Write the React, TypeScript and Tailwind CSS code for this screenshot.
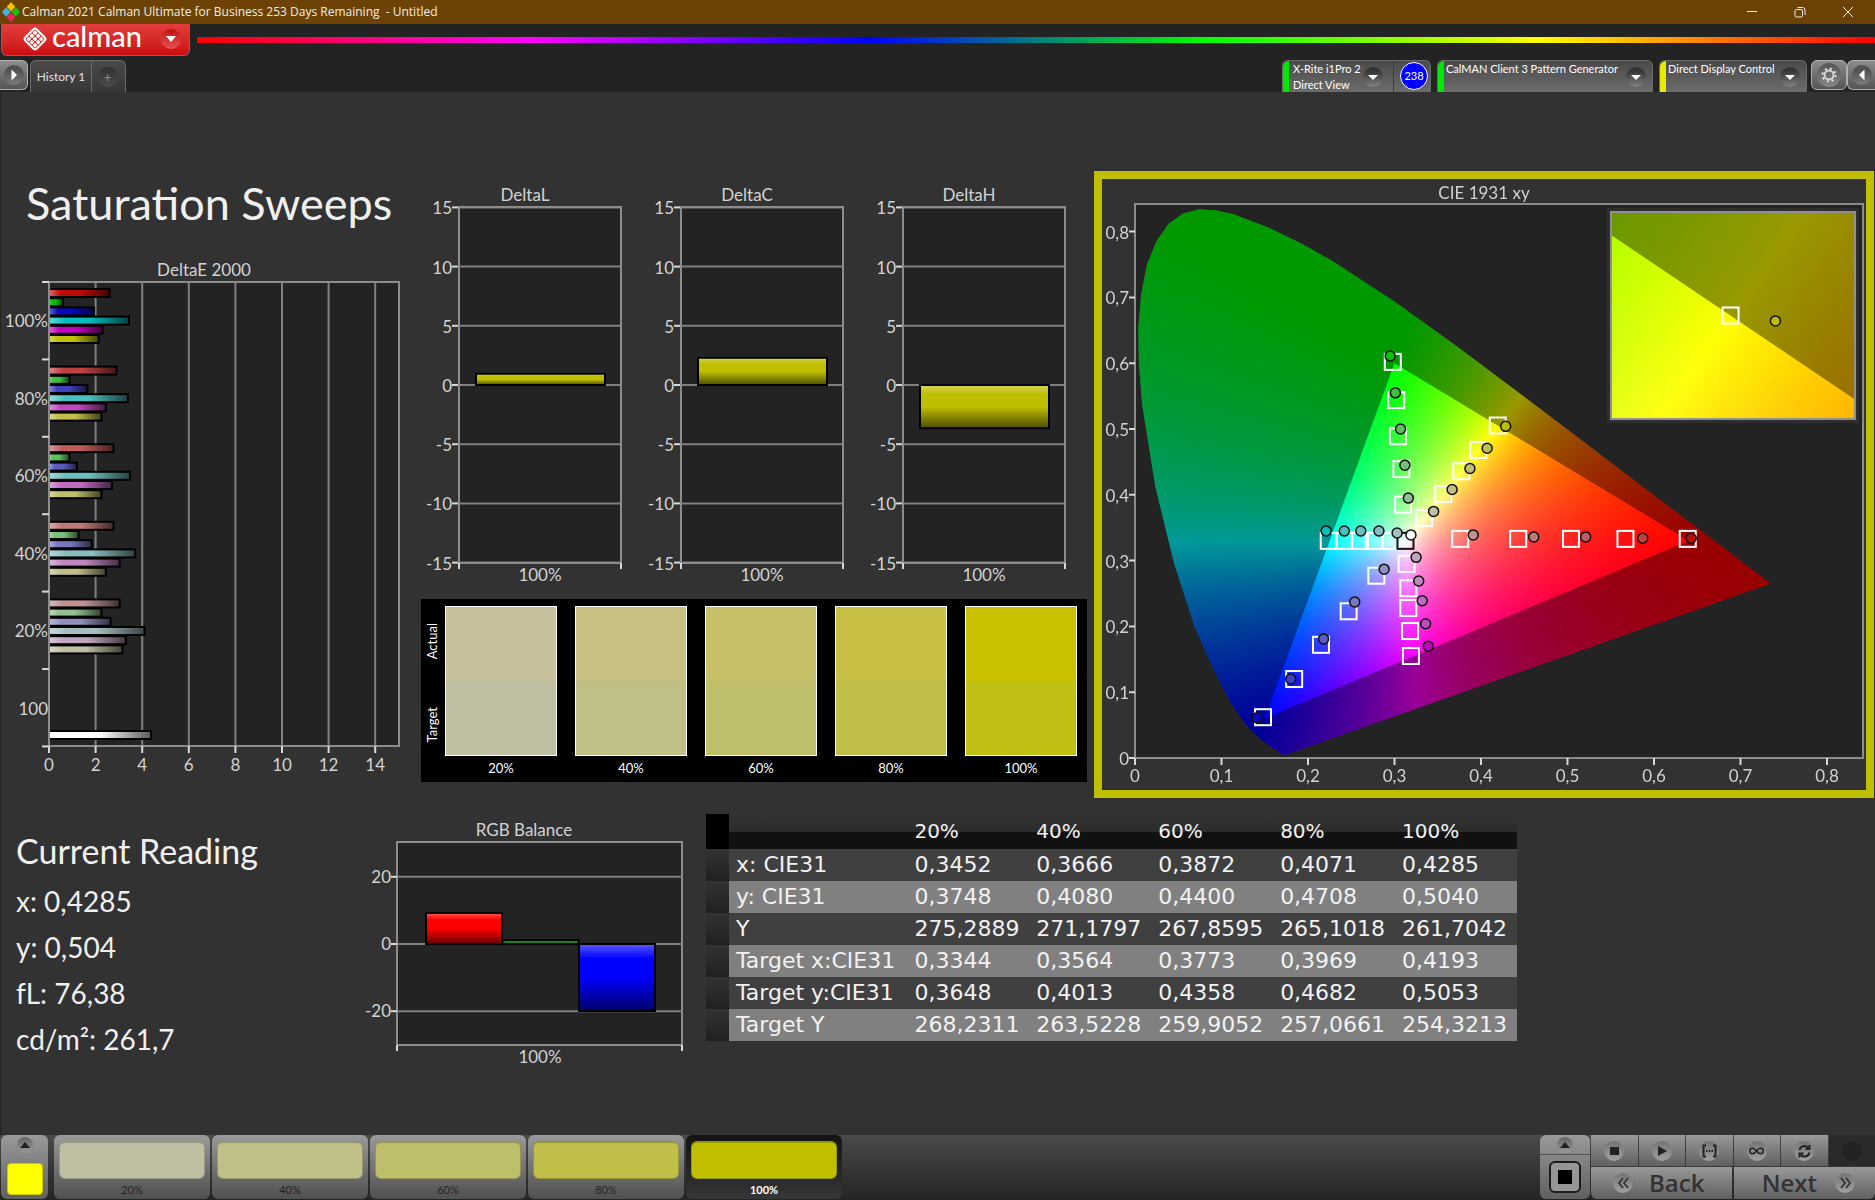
import { useLayoutEffect, useRef } from "react";
import type { ReactNode } from "react";

type Point = [number, number];

const SATURATIONS = ["20%", "40%", "60%", "80%", "100%"];

const HUES = ["red", "green", "blue", "cyan", "magenta", "yellow"] as const;
type Hue = (typeof HUES)[number];

const HUE_MASK: Record<Hue, [number, number, number]> = {
	red: [1, 0, 0],
	green: [0, 1, 0],
	blue: [0, 0, 1],
	cyan: [0, 1, 1],
	magenta: [1, 0, 1],
	yellow: [1, 1, 0],
};

// level 0 = 20% saturation, level 4 = 100%
function hueColor(hue: Hue, level: number) {
	const mask = HUE_MASK[hue];
	const single = mask[0] + mask[1] + mask[2] === 1;
	const low = single ? [145, 120, 92, 64, 8] : [163, 135, 107, 74, 0];
	const [r, g, b] = mask.map((m) => (m ? 191 : low[level]));
	return `rgb(${r},${g},${b})`;
}

const DELTA_E: { label: string; values: number[] }[] = [
	{ label: "100%", values: [2.6, 0.6, 1.93, 3.43, 2.3, 2.13] },
	{ label: "80%", values: [2.9, 0.88, 1.65, 3.38, 2.44, 2.25] },
	{ label: "60%", values: [2.77, 0.88, 1.2, 3.48, 2.7, 2.25] },
	{ label: "40%", values: [2.77, 1.27, 1.83, 3.7, 3.03, 2.44] },
	{ label: "20%", values: [3.03, 2.25, 2.64, 4.1, 3.3, 3.15] },
];

const TARGETS: Record<Hue, Point[]> = {
	green: [[0.31, 0.385], [0.308, 0.439], [0.304, 0.489], [0.302, 0.544], [0.298, 0.602]],
	yellow: [[0.3344, 0.3648], [0.3564, 0.4013], [0.3773, 0.4358], [0.3969, 0.4682], [0.4193, 0.5053]],
	red: [[0.376, 0.333], [0.443, 0.333], [0.504, 0.333], [0.567, 0.333], [0.639, 0.333]],
	cyan: [[0.296, 0.33], [0.277, 0.33], [0.26, 0.33], [0.242, 0.33], [0.224, 0.33]],
	magenta: [[0.314, 0.295], [0.316, 0.258], [0.316, 0.228], [0.318, 0.193], [0.319, 0.155]],
	blue: [[0.279, 0.277], [0.247, 0.223], [0.215, 0.172], [0.184, 0.12], [0.148, 0.062]],
};

const MEASURED: Record<Hue, Point[]> = {
	green: [[0.316, 0.395], [0.312, 0.445], [0.307, 0.5], [0.301, 0.555], [0.295, 0.611]],
	yellow: [[0.3452, 0.3748], [0.3666, 0.408], [0.3872, 0.44], [0.4071, 0.4708], [0.4285, 0.504]],
	red: [[0.391, 0.339], [0.461, 0.336], [0.521, 0.336], [0.587, 0.334], [0.643, 0.334]],
	cyan: [[0.303, 0.342], [0.282, 0.345], [0.261, 0.345], [0.242, 0.345], [0.221, 0.345]],
	magenta: [[0.325, 0.305], [0.328, 0.269], [0.332, 0.239], [0.336, 0.204], [0.339, 0.17]],
	blue: [[0.288, 0.287], [0.254, 0.237], [0.218, 0.181], [0.18, 0.12], [0.141, 0.061]],
};

const LOCUS: Point[] = [
	[0.1741, 0.005], [0.1714, 0.0051], [0.1689, 0.0069], [0.1644, 0.0109], [0.1566, 0.0177],
	[0.144, 0.0297], [0.1355, 0.0399], [0.1241, 0.0578], [0.1096, 0.0868], [0.0913, 0.1327],
	[0.0687, 0.2007], [0.0454, 0.295], [0.0235, 0.4127], [0.0082, 0.5384], [0.0045, 0.6],
	[0.0039, 0.6548], [0.0072, 0.705], [0.0139, 0.7502], [0.0252, 0.786], [0.0389, 0.812],
	[0.0555, 0.8276], [0.0743, 0.8338], [0.0943, 0.8322], [0.1142, 0.8262], [0.1547, 0.8059],
	[0.1929, 0.7816], [0.2296, 0.7543], [0.3016, 0.6923], [0.3731, 0.6245], [0.4441, 0.5547],
	[0.5125, 0.4866], [0.5752, 0.4242], [0.627, 0.3725], [0.6658, 0.334], [0.6915, 0.3083],
	[0.719, 0.2809], [0.7347, 0.2653],
];

const GAMUT: Point[] = [[0.64, 0.33], [0.3, 0.6], [0.15, 0.06]];

const CIE_W = 764;
const CIE_H = 611;
const cieX = (x: number) => 33 + x * 865;
const cieY = (y: number) => 579 - y * 658;

const INSET = { x: 509, y: 33, w: 244, h: 207 };
const insetX = (x: number) => INSET.x + ((x - 0.3948) / 0.05) * INSET.w;
const insetY = (y: number) => INSET.y + INSET.h - ((y - 0.4803) / 0.05) * INSET.h;

const READINGS = [
	{ label: "x: CIE31", values: ["0,3452", "0,3666", "0,3872", "0,4071", "0,4285"] },
	{ label: "y: CIE31", values: ["0,3748", "0,4080", "0,4400", "0,4708", "0,5040"] },
	{ label: "Y", values: ["275,2889", "271,1797", "267,8595", "265,1018", "261,7042"] },
	{ label: "Target x:CIE31", values: ["0,3344", "0,3564", "0,3773", "0,3969", "0,4193"] },
	{ label: "Target y:CIE31", values: ["0,3648", "0,4013", "0,4358", "0,4682", "0,5053"] },
	{ label: "Target Y", values: ["268,2311", "263,5228", "259,9052", "257,0661", "254,3213"] },
];

const SWATCHES = [
	{ label: "20%", actual: "#c6c09c", target: "#bfbfa3" },
	{ label: "40%", actual: "#c6c083", target: "#bfbf87" },
	{ label: "60%", actual: "#c6c068", target: "#bfbf6b" },
	{ label: "80%", actual: "#c7c044", target: "#bfbf4a" },
	{ label: "100%", actual: "#c8c000", target: "#bfbf14" },
];

const PATTERNS = [
	{ label: "20%", color: "#bfbfa3" },
	{ label: "40%", color: "#bfbf87" },
	{ label: "60%", color: "#bfbf6b" },
	{ label: "80%", color: "#bfbf4a" },
	{ label: "100%", color: "#bfbf00" },
];

/* ---------- chromaticity painting ---------- */

// linear RGB, scaled so that the strongest channel is full
function xyToRgb(x: number, y: number) {
	const yy = Math.max(y, 0.001);
	const X = x / yy;
	const Z = (1 - x - yy) / yy;
	const rgb = [
		3.2406 * X - 1.5372 - 0.4986 * Z,
		-0.9689 * X + 1.8758 + 0.0415 * Z,
		0.0557 * X - 0.204 + 1.057 * Z,
	].map((c) => Math.max(c, 0));
	const max = Math.max(...rgb);
	return rgb.map((c) => Math.round((255 * c) / max));
}

function paintColors(w: number, h: number, toXy: (px: number, py: number) => Point) {
	const canvas = document.createElement("canvas");
	canvas.width = w;
	canvas.height = h;
	const ctx = canvas.getContext("2d")!;
	const image = ctx.createImageData(w, h);
	for (let py = 0; py < h; py++) {
		for (let px = 0; px < w; px++) {
			const [x, y] = toXy(px, py);
			const [r, g, b] = xyToRgb(x, y);
			image.data.set([r, g, b, 255], (py * w + px) * 4);
		}
	}
	ctx.putImageData(image, 0, 0);
	return canvas;
}

function tracePath(ctx: CanvasRenderingContext2D, points: Point[], fx: (n: number) => number, fy: (n: number) => number) {
	points.forEach(([x, y], i) => (i ? ctx.lineTo(fx(x), fy(y)) : ctx.moveTo(fx(x), fy(y))));
	ctx.closePath();
}

function CieCanvas() {
	const ref = useRef<HTMLCanvasElement>(null);

	useLayoutEffect(() => {
		const ctx = ref.current!.getContext("2d")!;
		ctx.clearRect(0, 0, CIE_W, CIE_H);
		ctx.fillStyle = "#232323";
		ctx.fillRect(33, 25, 728, 554);

		ctx.save();
		ctx.beginPath();
		tracePath(ctx, LOCUS, cieX, cieY);
		ctx.clip();
		ctx.drawImage(paintColors(CIE_W, CIE_H, (px, py) => [(px - 33) / 865, (579 - py) / 658]), 0, 0);
		ctx.beginPath();
		ctx.rect(0, 0, CIE_W, CIE_H);
		tracePath(ctx, GAMUT, cieX, cieY);
		ctx.fillStyle = "rgba(0,0,0,0.4)";
		ctx.fill("evenodd");
		ctx.restore();

		ctx.fillStyle = "#2e2e2e";
		ctx.fillRect(INSET.x - 4, INSET.y - 4, INSET.w + 8, INSET.h + 8);
		ctx.save();
		ctx.beginPath();
		ctx.rect(INSET.x, INSET.y, INSET.w, INSET.h);
		ctx.clip();
		ctx.drawImage(
			paintColors(INSET.w, INSET.h, (px, py) => [
				0.3948 + (px / INSET.w) * 0.05,
				0.4803 + ((INSET.h - py) / INSET.h) * 0.05,
			]),
			INSET.x,
			INSET.y,
		);
		ctx.beginPath();
		ctx.rect(INSET.x, INSET.y, INSET.w, INSET.h);
		tracePath(ctx, GAMUT, insetX, insetY);
		ctx.fillStyle = "rgba(0,0,0,0.4)";
		ctx.fill("evenodd");
		ctx.restore();
	}, []);

	return <canvas ref={ref} width={CIE_W} height={CIE_H} className="block w-full" />;
}

/* ---------- charts ---------- */

function GlossDefs() {
	return (
		<svg width="0" height="0" className="absolute" aria-hidden="true">
			<defs>
				<linearGradient id="gloss-x">
					<stop offset="0" stopColor="#fff" stopOpacity="0.4" />
					<stop offset="0.2" stopColor="#fff" stopOpacity="0" />
					<stop offset="0.5" stopColor="#000" stopOpacity="0" />
					<stop offset="1" stopColor="#000" stopOpacity="0.65" />
				</linearGradient>
				<linearGradient id="gloss-y" x1="0" y1="0" x2="0" y2="1">
					<stop offset="0" stopColor="#fff" stopOpacity="0.35" />
					<stop offset="0.22" stopColor="#fff" stopOpacity="0" />
					<stop offset="0.5" stopColor="#000" stopOpacity="0" />
					<stop offset="1" stopColor="#000" stopOpacity="0.6" />
				</linearGradient>
			</defs>
		</svg>
	);
}

type BarProps = { x: number; y: number; w: number; h: number; color: string; gloss: "url(#gloss-x)" | "url(#gloss-y)" };

function Bar({ x, y, w, h, color, gloss }: BarProps) {
	return (
		<g>
			<rect x={x} y={y} width={w} height={h} fill={color} />
			<rect x={x} y={y} width={w} height={h} fill={gloss} stroke="#000" strokeWidth="2" />
		</g>
	);
}

function Label({ x, y, anchor = "middle", children }: { x: number; y: number; anchor?: "middle" | "end"; children: ReactNode }) {
	return (
		<text x={x} y={y + 6} textAnchor={anchor} fontSize="17" fill="#d2d2d2">
			{children}
		</text>
	);
}

function DeltaEChart() {
	const px = (v: number) => 49 + v * 23.3;
	return (
		<svg viewBox="0 0 421 520" className="block w-full" role="img" aria-label="DeltaE 2000">
			<Label x={204} y={11}>DeltaE 2000</Label>
			<rect x="49" y="23" width="350" height="464" fill="#232323" />
			{[2, 4, 6, 8, 10, 12, 14].map((v) => (
				<line key={v} x1={px(v)} x2={px(v)} y1="23" y2="487" stroke="#808080" strokeWidth="2" />
			))}
			{DELTA_E.map((group, g) => (
				<g key={group.label}>
					{group.values.map((value, i) => (
						<Bar
							key={HUES[i]}
							x={49}
							y={30 + g * 77.6 + i * 9.2}
							w={value * 23.3}
							h={8}
							color={hueColor(HUES[i], 4 - g)}
							gloss="url(#gloss-x)"
						/>
					))}
					<Label x={48} y={62 + g * 77.6} anchor="end">{group.label}</Label>
				</g>
			))}
			<Bar x={49} y={472} w={102} h={8} color="#ffffff" gloss="url(#gloss-x)" />
			<Label x={48} y={450} anchor="end">100</Label>
			<rect x="49" y="23" width="350" height="464" fill="none" stroke="#8c8c8c" strokeWidth="2" />
			{[0, 1, 2, 3, 4, 5, 6].map((i) => (
				<line key={i} x1="42" x2="49" y1={23 + i * 77.4} y2={23 + i * 77.4} stroke="#d8d8d8" strokeWidth="2" />
			))}
			{[0, 2, 4, 6, 8, 10, 12, 14].map((v) => (
				<g key={v}>
					<line x1={px(v)} x2={px(v)} y1="487" y2="494" stroke="#d8d8d8" strokeWidth="2" />
					<Label x={px(v)} y={506}>{v}</Label>
				</g>
			))}
		</svg>
	);
}

const DELTAS = [
	{ name: "DeltaL", value: 0.95 },
	{ name: "DeltaC", value: 2.3 },
	{ name: "DeltaH", value: -3.65 },
];

function DeltaCharts() {
	return (
		<svg viewBox="0 0 666 410" className="block w-full" role="img" aria-label="DeltaL, DeltaC and DeltaH">
			{DELTAS.map(({ name, value }, i) => {
				const left = 38 + i * 222;
				const top = value > 0 ? 200 - value * 11.84 : 200;
				return (
					<g key={name}>
						<Label x={left + 66} y={10}>{name}</Label>
						<rect x={left} y="22" width="162" height="355" fill="#232323" />
						{[15, 10, 5, 0, -5, -10, -15].map((v) => (
							<g key={v}>
								<line x1={left} x2={left + 162} y1={200 - v * 11.84} y2={200 - v * 11.84} stroke="#808080" strokeWidth="2" />
								<line x1={left - 7} x2={left} y1={200 - v * 11.84} y2={200 - v * 11.84} stroke="#d8d8d8" strokeWidth="2" />
								<Label x={left - 7} y={201 - v * 11.84} anchor="end">{v}</Label>
							</g>
						))}
						<Bar x={left + 17} y={top} w={129} h={Math.abs(value) * 11.84} color="#bfbf00" gloss="url(#gloss-y)" />
						<rect x={left} y="22" width="162" height="356" fill="none" stroke="#8c8c8c" strokeWidth="2" />
						<path d={`M${left} 378v6M${left + 162} 378v6`} stroke="#d8d8d8" strokeWidth="2" />
						<Label x={left + 81} y={390}>100%</Label>
					</g>
				);
			})}
		</svg>
	);
}

function RgbBalance() {
	const bars = [
		{ color: "#ff0000", y: 93, h: 31 },
		{ color: "#0f9a0f", y: 120, h: 4 },
		{ color: "#0000ff", y: 124, h: 67 },
	];
	return (
		<svg viewBox="0 0 330 255" className="block w-full" role="img" aria-label="RGB Balance">
			<Label x={164} y={10}>RGB Balance</Label>
			<rect x="37" y="22" width="285" height="203" fill="#232323" stroke="#8c8c8c" strokeWidth="2" />
			{[20, 0, -20].map((v) => (
				<g key={v}>
					<line x1="37" x2="322" y1={124 - v * 3.36} y2={124 - v * 3.36} stroke="#808080" strokeWidth="2" />
					<line x1="31" x2="37" y1={124 - v * 3.36} y2={124 - v * 3.36} stroke="#d8d8d8" strokeWidth="2" />
					<Label x={31} y={124 - v * 3.36} anchor="end">{v}</Label>
				</g>
			))}
			{bars.map((bar, i) => (
				<Bar key={bar.color} x={66 + i * 76.5} y={bar.y} w={76} h={bar.h} color={bar.color} gloss="url(#gloss-y)" />
			))}
			<path d="M37 225v6M322 225v6" stroke="#d8d8d8" strokeWidth="2" />
			<Label x={180} y={237}>100%</Label>
		</svg>
	);
}

function CieChart() {
	const ticks = [0, 1, 2, 3, 4, 5, 6, 7, 8];
	const tickLabel = (n: number) => (n === 0 ? "0" : `0,${n}`);
	return (
		<figure className="relative border-8 border-[#bfbf00]">
			<CieCanvas />
			<svg viewBox={`0 0 ${CIE_W} ${CIE_H}`} className="absolute inset-0 w-full" role="img" aria-label="CIE 1931 xy">
				<Label x={382} y={14}>CIE 1931 xy</Label>
				<rect x="33" y="25" width="728" height="554" fill="none" stroke="#8c8c8c" strokeWidth="2" />
				{ticks.map((n) => (
					<g key={n}>
						<path d={`M27 ${cieY(n / 10)}h6M${cieX(n / 10)} 579v7`} stroke="#d8d8d8" strokeWidth="2" />
						<Label x={27} y={cieY(n / 10) + 1} anchor="end">{tickLabel(n)}</Label>
						<Label x={cieX(n / 10)} y={597}>{tickLabel(n)}</Label>
					</g>
				))}
				{HUES.map((hue) =>
					TARGETS[hue].map(([x, y], i) => (
						<rect key={hue + i} x={cieX(x) - 8} y={cieY(y) - 8} width="16" height="16" fill="none" stroke="#fff" strokeWidth="2" />
					)),
				)}
				<rect x={cieX(0.3127) - 8} y={cieY(0.33) - 8} width="16" height="16" fill="none" stroke="#111" strokeWidth="2" />
				{HUES.map((hue) =>
					MEASURED[hue].map(([x, y], i) => (
						<circle key={hue + i} cx={cieX(x)} cy={cieY(y)} r="5" fill={hueColor(hue, i)} stroke="#111" strokeWidth="1.5" />
					)),
				)}
				<circle cx={cieX(0.319)} cy={cieY(0.339)} r="5" fill="#fff" stroke="#111" strokeWidth="1.5" />
				<rect x={INSET.x} y={INSET.y} width={INSET.w} height={INSET.h} fill="none" stroke="#909090" strokeWidth="2" />
				<rect x={insetX(0.4193) - 8} y={insetY(0.5053) - 8} width="16" height="16" fill="none" stroke="#fff" strokeWidth="2" />
				<circle cx={insetX(0.4285)} cy={insetY(0.504)} r="5" fill="#bfbf00" stroke="#111" strokeWidth="1.5" />
			</svg>
		</figure>
	);
}

/* ---------- panels ---------- */

function SwatchPanel() {
	return (
		<div className="flex h-[183px] bg-black pr-2.5 text-[13px] text-white">
			<div className="flex w-6 shrink-0 flex-col pb-4">
				<div className="flex flex-1 items-center justify-center">
					<span className="rotate-180 [writing-mode:vertical-rl]">Actual</span>
				</div>
				<div className="flex flex-1 items-center justify-center">
					<span className="rotate-180 [writing-mode:vertical-rl]">Target</span>
				</div>
			</div>
			<div className="grid flex-1 grid-cols-5 gap-4.5 pt-[7px]">
				{SWATCHES.map((s) => (
					<div key={s.label} className="text-center">
						<div className="flex h-[150px] flex-col border border-white">
							<div className="flex-1" style={{ backgroundColor: s.actual }} />
							<div className="flex-1" style={{ backgroundColor: s.target }} />
						</div>
						<div className="leading-6">{s.label}</div>
					</div>
				))}
			</div>
		</div>
	);
}

function ReadingsTable() {
	return (
		<table className="w-full table-fixed border-collapse text-left font-['DejaVu_Sans',sans-serif] text-[22px] leading-8 text-[#f2f2f2]">
			<colgroup>
				<col className="w-[23px]" />
				<col className="w-[22%]" />
				<col />
				<col />
				<col />
				<col />
				<col />
			</colgroup>
			<thead>
				<tr className="h-[35px] bg-linear-to-b from-[#333] from-0% via-[#2b2b2b] via-50% to-[#111] to-50%">
					<td className="bg-black" />
					<td />
					{SATURATIONS.map((s) => (
						<th key={s} scope="col" className="p-0 pl-[7px] text-[20px] leading-[35px] font-normal">
							{s}
						</th>
					))}
				</tr>
			</thead>
			<tbody>
				{READINGS.map((row) => (
					<tr key={row.label} className="h-8 odd:bg-[#404040] even:bg-[#808080]">
						<td className="bg-linear-to-b from-[#333] to-[#202020]" />
						<th scope="row" className="p-0 pl-[7px] font-normal whitespace-nowrap">
							{row.label}
						</th>
						{row.values.map((v, i) => (
							<td key={i} className="p-0 pl-[7px]">
								{v}
							</td>
						))}
					</tr>
				))}
			</tbody>
		</table>
	);
}

/* ---------- window chrome ---------- */

function AppIcon() {
	return (
		<svg width="18" height="20" viewBox="0 0 18 20" aria-hidden="true">
			<path d="M9 0l4.200 4.800L9 9.600 4.800 4.800z" fill="#f5c400" />
			<path d="M4.200 5.200l4.200 4.800-4.200 4.800L0 10z" fill="#3fb6e8" />
			<path d="M13.800 5.200L18 10l-4.200 4.800L9.600 10z" fill="#12c412" />
			<path d="M9 10.400l4.200 4.800L9 20l-4.200-4.800z" fill="#f0225c" />
		</svg>
	);
}

function CalmanMark() {
	return (
		<svg width="26" height="26" viewBox="0 0 26 26" fill="#fff" aria-hidden="true">
			<g transform="rotate(45 13 13)">
				<rect x="5" y="5" width="16" height="16" rx="2.500" fill="none" stroke="#fff" strokeWidth="2" />
				{[0, 1, 2].map((r) =>
					[0, 1, 2].map((c) => <rect key={`${r}${c}`} x={6.8 + c * 4.4} y={6.8 + r * 4.4} width="3.600" height="3.600" rx="1" />),
				)}
			</g>
		</svg>
	);
}

function RoundArrow({ dir }: { dir: "down" | "left" | "right" }) {
	const paths = {
		down: "M5 8h10l-5 5z",
		left: "M12.500 4.500v11L7 10z",
		right: "M7.500 4.500v11L13 10z",
	};
	return (
		<span className="flex size-5 shrink-0 items-center justify-center rounded-full bg-linear-to-b from-black/40 to-white/20">
			<svg width="20" height="20" viewBox="0 0 20 20" fill="#fff" aria-hidden="true">
				<path d={paths[dir]} />
			</svg>
		</span>
	);
}

function TitleBar() {
	return (
		<div className="flex h-6 items-center bg-[#6d4305] font-['Open_Sans',sans-serif] text-[12px] text-[#f1ece4]">
			<div className="flex flex-1 items-center gap-0.5 pl-0.5">
				<AppIcon />
				<span className="whitespace-pre">Calman 2021 Calman Ultimate for Business 253 Days Remaining  - Untitled</span>
			</div>
			<button aria-label="Minimize" className="flex w-12 justify-center">
				<svg width="12" height="12" viewBox="0 0 12 12" stroke="currentColor" fill="none">
					<path d="M1 5.500h10" />
				</svg>
			</button>
			<button aria-label="Restore" className="flex w-12 justify-center">
				<svg width="12" height="12" viewBox="0 0 12 12" stroke="currentColor" fill="none">
					<rect x="1" y="3.500" width="7.500" height="7.500" rx="1.500" />
					<path d="M3.500 1.500h5a2.500 2.500 0 0 1 2.500 2.500v5" />
				</svg>
			</button>
			<button aria-label="Close" className="mr-[3px] flex w-12 justify-center">
				<svg width="12" height="12" viewBox="0 0 12 12" stroke="currentColor" fill="none">
					<path d="M1 1l10 10M11 1L1 11" />
				</svg>
			</button>
		</div>
	);
}

const DEVICE = "flex h-8 items-start rounded-t-md border border-b-0 border-[#6a6a6a] bg-linear-to-b from-[#4a4a4a] to-[#6c6c6c] text-left text-[11px] leading-4 text-white";
const SQUARE = "flex h-[30px] items-center justify-center rounded-md border border-[#b0b0b0] bg-linear-to-b from-[#8c8c8c] to-[#555]";

function Header() {
	return (
		<header className="bg-[#232323]">
			<div className="flex items-start gap-[7px]">
				<button className="ml-px flex h-8 w-[189px] items-center rounded-b-md border border-t-0 border-[#8a6060] bg-linear-to-b from-[#e23c3c] to-[#cc0a10] pl-5 text-white">
					<span className="pb-0.5">
						<CalmanMark />
					</span>
					<span className="pb-2 pl-1 text-[29px] leading-7 font-medium">calman</span>
					<span className="ml-auto pr-2 pb-0.5">
						<span className="flex size-5 items-center justify-center rounded-full bg-linear-to-b from-[#c00a10] to-[#e85050]">
							<svg width="10" height="6" viewBox="0 0 10 6" fill="#fff" aria-hidden="true">
								<path d="M0 0h10L5 6z" />
							</svg>
						</span>
					</span>
				</button>
				<div className="mt-[13px] h-1.5 flex-1 bg-[linear-gradient(to_right,#f00_0%,#f0f_20%,#00f_40%,#0f0_60%,#ff0_80%,#f00_100%)]" />
			</div>
			<div className="mt-1 flex items-start">
				<button aria-label="Show workflow" className={`${SQUARE} w-7 rounded-l-none border-l-0`}>
					<RoundArrow dir="right" />
				</button>
				<div className="ml-0.5 flex h-8 items-stretch rounded-t-md border border-b-0 border-[#6a6a6a] bg-linear-to-b from-[#4a4a4a] to-[#363636]">
					<button className="w-[60px] text-[12px] text-[#e2e2e2]">History 1</button>
					<button aria-label="Add tab" className="flex w-[34px] items-center justify-center border-l border-[#6a6a6a] pr-0.5">
						<span className="flex size-5 items-center justify-center rounded-full bg-linear-to-b from-[#303030] to-[#4c4c4c] text-[13px] leading-4 text-[#8a8a8a]">
							+
						</span>
					</button>
				</div>
				<div className="ml-auto flex items-start gap-1.5">
					<div className={`${DEVICE} w-[149px]`}>
						<span className="h-full w-1.5 shrink-0 rounded-tl-md bg-[#00e800]" />
						<button className="flex h-full flex-1 items-start border-r border-[#3c3c3c] pl-1 text-left whitespace-nowrap">
							<span>
								X-Rite i1Pro 2
								<br />
								Direct View
							</span>
							<span className="mt-1.5 ml-auto pr-2.5">
								<RoundArrow dir="down" />
							</span>
						</button>
						<span className="mt-px mr-0.5 ml-1.5 flex size-7 shrink-0 items-center justify-center rounded-full border border-white bg-[#00f]">
							238
						</span>
					</div>
					<button className={`${DEVICE} w-[216px]`}>
						<span className="h-full w-1.5 shrink-0 rounded-tl-md bg-[#00e800]" />
						<span className="pl-0.5 whitespace-nowrap">CalMAN Client 3 Pattern Generator</span>
						<span className="mt-1.5 ml-auto pr-1.5">
							<RoundArrow dir="down" />
						</span>
					</button>
					<button className={`${DEVICE} w-[148px]`}>
						<span className="h-full w-1.5 shrink-0 rounded-tl-md bg-[#e8e800]" />
						<span className="pl-0.5 whitespace-nowrap">Direct Display Control</span>
						<span className="mt-1.5 ml-auto pr-1.5">
							<RoundArrow dir="down" />
						</span>
					</button>
					<div className="-ml-0.5 flex">
						<button aria-label="Settings" className={`${SQUARE} w-9`}>
							<span className="flex size-6 items-center justify-center rounded-full bg-linear-to-b from-[#555] to-[#888]">
								<svg width="16" height="16" viewBox="0 0 16 16" fill="none" stroke="#ddd" aria-hidden="true">
									<circle cx="8" cy="8" r="4.500" strokeWidth="1.800" />
									<circle cx="8" cy="8" r="6.500" strokeWidth="2" strokeDasharray="2.200 2.900" />
								</svg>
							</span>
						</button>
						<button aria-label="Show panel" className={`${SQUARE} w-7 rounded-r-none border-r-0`}>
							<RoundArrow dir="left" />
						</button>
					</div>
				</div>
			</div>
		</header>
	);
}

const PLAYER_ICONS: { label: string; icon: ReactNode }[] = [
	{ label: "Stop", icon: <rect x="5" y="5" width="9" height="8" fill="#222" /> },
	{ label: "Play", icon: <path d="M6 4l9 5-9 5z" fill="#222" /> },
	{
		label: "Range",
		icon: <path d="M6 3.500H3.500v11H6M13 3.500h2.500v11H13M6 9h1.500M8.800 9h1.500M11.500 9H13" fill="none" stroke="#222" strokeWidth="2" />,
	},
	{
		label: "Loop",
		icon: (
			<path
				d="M9.500 9C8 7 7 6.300 5.500 6.300a2.700 2.700 0 0 0 0 5.400C7 11.700 8 11 9.500 9s2.500-2.700 4-2.700a2.700 2.700 0 0 1 0 5.400C12 11.700 11 11 9.500 9z"
				fill="none"
				stroke="#222"
				strokeWidth="1.500"
			/>
		),
	},
	{
		label: "Refresh",
		icon: (
			<path
				d="M4.500 8a5 5 0 0 1 8.500-2.500M14.500 10.500A5 5 0 0 1 6 13M14.500 3v4h-4M4.500 15.500v-4h4"
				fill="none"
				stroke="#222"
				strokeWidth="2"
			/>
		),
	},
];

const METAL = "bg-linear-to-b from-[#9a9a9a] to-[#606060]";

function Footer() {
	return (
		<footer className="flex h-[65px] items-stretch bg-linear-to-b from-[#4a4a4a] to-[#242424] pb-px">
			<button aria-label="Pattern colour" className={`${METAL} ml-px flex w-[47px] flex-col items-center rounded-md`}>
				<span className="mt-0.5 flex size-4 items-center justify-center rounded-full bg-linear-to-b from-[#666] to-[#999]">
					<svg width="10" height="6" viewBox="0 0 10 6" fill="#222" aria-hidden="true">
						<path d="M0 6h10L5 0z" />
					</svg>
				</span>
				<span className="mt-2.5 h-8 w-9 rounded-sm border border-[#c8c800] bg-[#ff0]" />
			</button>
			<div className="ml-1.5 flex gap-0.5">
				{PATTERNS.map((p) => {
					const active = p.label === "100%";
					return (
						<button
							key={p.label}
							aria-pressed={active}
							className={
								active
									? "flex w-[156px] flex-col items-stretch rounded-md bg-linear-to-b from-[#141414] to-[#363636] px-[5px] pt-1.5 text-[11px] font-bold text-white"
									: "flex w-[156px] flex-col items-stretch rounded-md bg-linear-to-b from-[#9a9a9a] to-[#505050] px-[5px] pt-1.5 text-[11px] text-[#242424]"
							}
						>
							<span className="h-[38px] rounded-md border border-t-2 border-black/20" style={{ backgroundColor: p.color }} />
							<span className="pt-[3px] leading-4">{p.label}</span>
						</button>
					);
				})}
			</div>
			<div className="ml-auto flex">
				<div className={`${METAL} mr-px flex w-[50px] flex-col items-center rounded-md`}>
					<button aria-label="Expand" className="flex h-5 w-full items-center justify-center border-b border-[#505050]">
						<span className="flex size-4 items-center justify-center rounded-full bg-linear-to-b from-[#666] to-[#999]">
							<svg width="10" height="6" viewBox="0 0 10 6" fill="#222" aria-hidden="true">
								<path d="M0 6h10L5 0z" />
							</svg>
						</span>
					</button>
					<button aria-label="Pattern window" className="mt-1.5 flex size-8 items-center justify-center rounded-md border-2 border-[#1c1c1c] bg-[#969696]">
						<span className="size-3.5 bg-black" />
					</button>
				</div>
				<div className="flex w-[284px] flex-col">
					<div className="grid flex-1 grid-cols-6 gap-px">
						{PLAYER_ICONS.map((b) => (
							<button key={b.label} aria-label={b.label} className={`${METAL} flex items-center justify-center`}>
								<span className="flex size-5 items-center justify-center rounded-full bg-linear-to-b from-[#747474] to-[#a0a0a0]">
									<svg width="19" height="18" viewBox="0 0 19 18" aria-hidden="true">
										{b.icon}
									</svg>
								</span>
							</button>
						))}
						<button aria-label="Record" disabled className="flex items-center justify-center bg-[#2a2a2a]">
							<span className="size-5 rounded-full bg-[#222]" />
						</button>
					</div>
					<div className="mt-px grid h-8 grid-cols-2 gap-0.5 font-['Open_Sans',sans-serif] text-[24px] leading-8 font-semibold text-[#333]">
						<button className={`${METAL} flex items-center gap-4 rounded-bl-md pl-5.5`}>
							<Chevrons d="M9 4L5 9l4 5M14 4l-4 5 4 5" />
							Back
						</button>
						<button className={`${METAL} flex items-center justify-end gap-4.5 rounded-br-md pr-5`}>
							Next
							<Chevrons d="M5 4l4 5-4 5M10 4l4 5-4 5" />
						</button>
					</div>
				</div>
			</div>
		</footer>
	);
}

function Chevrons({ d }: { d: string }) {
	return (
		<span className="flex size-5 items-center justify-center rounded-full bg-linear-to-b from-[#747474] to-[#a0a0a0]">
			<svg width="19" height="18" viewBox="0 0 19 18" fill="none" stroke="#333" strokeWidth="1.800" aria-hidden="true">
				<path d={d} />
			</svg>
		</span>
	);
}

export default function App() {
	return (
		<div className="flex min-h-screen flex-col bg-[#323232] font-[Lato,sans-serif]">
			<GlossDefs />
			<TitleBar />
			<Header />
			<main className="flex-1 shadow-[inset_1px_0_#222]">
				<section className="grid grid-cols-[421fr_666fr_788fr] items-start pt-[79px]">
					<div>
						<h1 className="pt-1.5 pl-[26px] text-[45px] leading-[52px] whitespace-nowrap text-[#f0f0f0]">Saturation Sweeps</h1>
						<div className="pt-[30px]">
							<DeltaEChart />
						</div>
					</div>
					<div className="pt-[14px]">
						<DeltaCharts />
						<div className="pt-1">
							<SwatchPanel />
						</div>
					</div>
					<div className="pr-px pl-[7px]">
						<CieChart />
					</div>
				</section>
				<section className="grid grid-cols-[360fr_330fr_16fr_811fr_358fr] items-start pt-4">
					<div className="pt-4 pl-4 text-[#f0f0f0]">
						<h2 className="text-[34px] leading-[42px]">Current Reading</h2>
						<ul className="pt-1.5 text-[28px] leading-[46px]">
							<li>x: 0,4285</li>
							<li>y: 0,504</li>
							<li>fL: 76,38</li>
							<li>cd/m²: 261,7</li>
						</ul>
					</div>
					<div className="pt-1.5">
						<RgbBalance />
					</div>
					<div />
					<ReadingsTable />
				</section>
			</main>
			<Footer />
		</div>
	);
}
